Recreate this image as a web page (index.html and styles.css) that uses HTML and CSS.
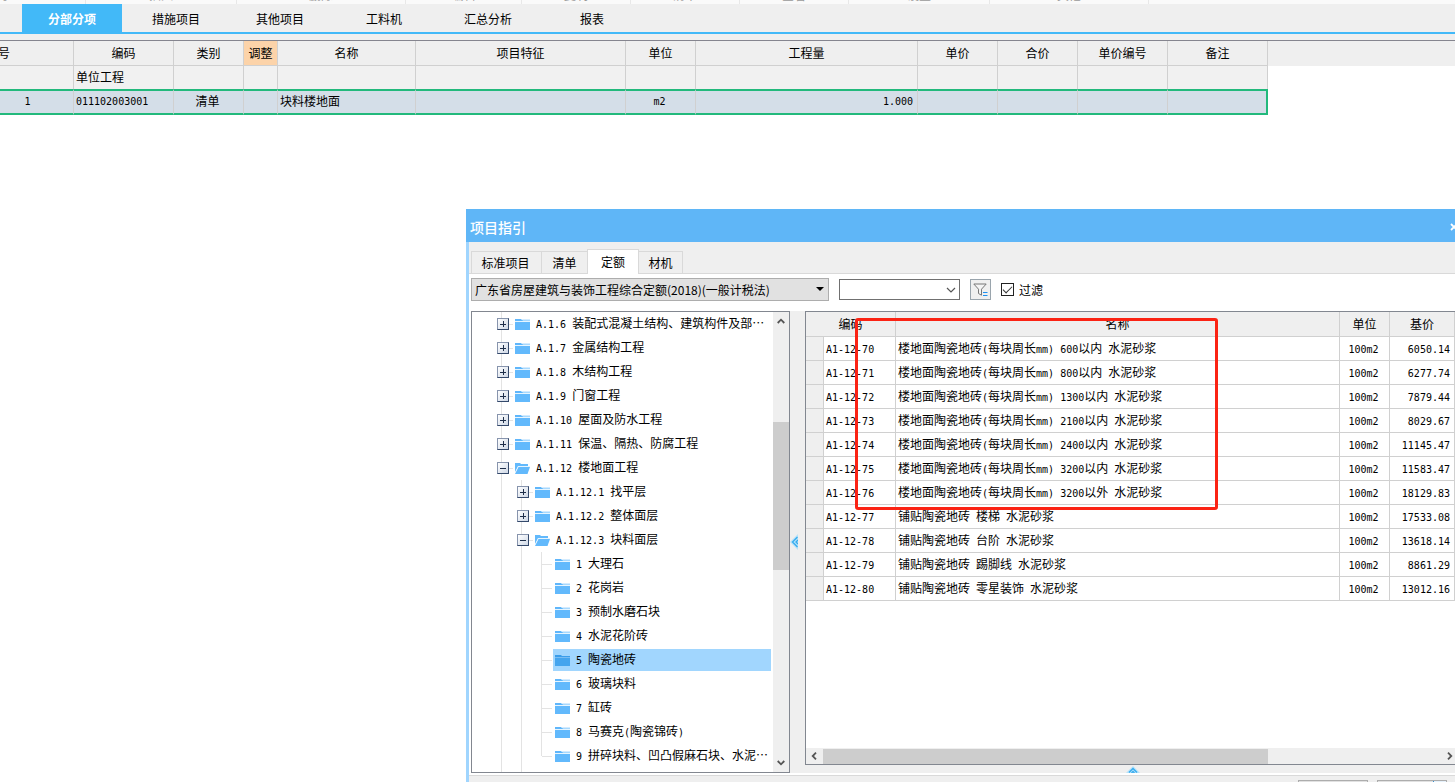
FILE: index.html
```html
<!DOCTYPE html>
<html lang="zh-CN">
<head>
<meta charset="utf-8">
<title>分部分项</title>
<link rel="stylesheet" href="styles.css">
</head>
<body>
<svg class="defs" aria-hidden="true">
  <symbol id="folder" viewBox="0 0 15 13">
    <path fill="#5fb6fb" d="M0 1h6l1 1h8v2H0z"/><path fill="#a7d8fd" d="M7 1.500h8v1.500H8z"/><path fill="#e6f5ff" d="M0 3h15v1H0z"/><path fill="#62b9fc" d="M0 4h15v8H0z"/>
  </symbol>
  <symbol id="folder-dark" viewBox="0 0 15 13">
    <path fill="#3b9dea" d="M0 1h6l1 1h8v2H0z"/><path fill="#79bdf2" d="M0 3h15v1H0z"/><path fill="#45a5ee" d="M0 4h15v8H0z"/>
  </symbol>
  <symbol id="folder-open" viewBox="0 0 15 13">
    <path fill="#62b9fc" d="M0 1h5l1 1h7v2H3L0 10z"/><path fill="#e6f5ff" d="M3 4h12v1H3z"/><path fill="#62b9fc" d="M3.500 5H15l-2.500 7H0z"/>
  </symbol>
  <symbol id="chev-up" viewBox="0 0 8 6"><path fill="none" stroke="#555" stroke-width="1.800" d="M.7 5 4 1.700 7.300 5"/></symbol>
  <symbol id="chev-down" viewBox="0 0 8 6"><path fill="none" stroke="#555" stroke-width="1.800" d="M.7 1 4 4.300 7.300 1"/></symbol>
  <symbol id="chev-left" viewBox="0 0 6 8"><path fill="none" stroke="#555" stroke-width="1.800" d="M5 .7 1.700 4 5 7.300"/></symbol>
  <symbol id="chev-right" viewBox="0 0 6 8"><path fill="none" stroke="#555" stroke-width="1.800" d="M1 .7 4.300 4 1 7.300"/></symbol>
</svg>

<div class="toolbar">
  <span class="tool tool-a">查询</span><span class="tool tool-b">插入</span><span class="tool tool-c">删除</span><span class="tool tool-d">编辑</span><span class="tool tool-e">复制</span><span class="tool tool-e">清单</span><span class="tool tool-e">查看</span><span class="tool tool-f">设置</span><span class="tool tool-g">其他</span>
</div>

<nav class="tabs">
  <button class="tab tab-active">分部分项</button>
  <button class="tab">措施项目</button>
  <button class="tab">其他项目</button>
  <button class="tab">工料机</button>
  <button class="tab">汇总分析</button>
  <button class="tab">报表</button>
</nav>

<div class="sheet">
  <table class="bill">
    <colgroup><col class="w74"><col class="w100"><col class="w70"><col class="w34"><col class="w138"><col class="w210"><col class="w70"><col class="w222"><col class="w80"><col class="w80"><col class="w90"><col class="w100"></colgroup>
    <thead>
      <tr><th class="seq">号</th><th>编码</th><th>类别</th><th class="adjust">调整</th><th>名称</th><th>项目特征</th><th>单位</th><th>工程量</th><th>单价</th><th>合价</th><th>单价编号</th><th>备注</th></tr>
    </thead>
    <tbody>
      <tr><td></td><td>单位工程</td><td></td><td></td><td></td><td></td><td></td><td></td><td></td><td></td><td></td><td></td></tr>
      <tr class="current"><td class="rownum"><span class="n">1</span></td><td><span class="n">011102003001</span></td><td class="mid">清单</td><td></td><td>块料楼地面</td><td></td><td class="mid"><span class="n">m2</span></td><td class="num"><span class="n">1.000</span></td><td></td><td></td><td></td><td></td></tr>
    </tbody>
  </table>
</div>

<section class="dialog">
  <header class="titlebar">
    <h1>项目指引</h1>
    <button class="close" aria-label="关闭"><svg width="8" height="8" viewBox="0 0 8 8"><path fill="none" stroke="#fff" stroke-width="1.800" d="m1 1 6 6M7 1 1 7"/></svg></button>
  </header>
  <div class="frame">
    <div class="pagetabs">
      <button class="ptab">标准项目</button><button class="ptab">清单</button><button class="ptab ptab-active">定额</button><button class="ptab">材机</button>
    </div>
    <div class="page">
      <div class="filters">
        <div class="library">
          <select aria-label="定额库"><option>广东省房屋建筑与装饰工程综合定额(2018)(一般计税法)</option></select>
          <svg class="caret" width="8" height="4" viewBox="0 0 8 4"><path d="M0 0h8L4 4z"/></svg>
        </div>
        <div class="combo">
          <input type="text" aria-label="关键字">
          <button aria-label="展开"><svg width="10" height="6" viewBox="0 0 10 6"><path fill="none" stroke="#555" stroke-width="1.200" d="m1 1 4 4 4-4"/></svg></button>
        </div>
        <button class="funnel" aria-label="筛选"><svg width="15" height="14" viewBox="0 0 15 14"><path fill="#f4f4f4" stroke="#777" d="M.8 1h12.400L8.500 6.200v6L5.500 10.500V6.200z"/><path stroke="#1e90ef" d="M10 9.500h4.500M10 12.500h4.500"/></svg></button>
        <label class="check"><input type="checkbox" checked>过滤</label>
      </div>

      <div class="panes">
        <div class="treebox">
          <ul class="tree">
            <li><div class="row"><button class="exp plus" aria-label="展开"></button><svg class="ico"><use href="#folder"/></svg><span><span class="n">A.1.6 </span>装配式混凝土结构、建筑构件及部⋯</span></div></li>
            <li><div class="row"><button class="exp plus" aria-label="展开"></button><svg class="ico"><use href="#folder"/></svg><span><span class="n">A.1.7 </span>金属结构工程</span></div></li>
            <li><div class="row"><button class="exp plus" aria-label="展开"></button><svg class="ico"><use href="#folder"/></svg><span><span class="n">A.1.8 </span>木结构工程</span></div></li>
            <li><div class="row"><button class="exp plus" aria-label="展开"></button><svg class="ico"><use href="#folder"/></svg><span><span class="n">A.1.9 </span>门窗工程</span></div></li>
            <li><div class="row"><button class="exp plus" aria-label="展开"></button><svg class="ico"><use href="#folder"/></svg><span><span class="n">A.1.10 </span>屋面及防水工程</span></div></li>
            <li><div class="row"><button class="exp plus" aria-label="展开"></button><svg class="ico"><use href="#folder"/></svg><span><span class="n">A.1.11 </span>保温、隔热、防腐工程</span></div></li>
            <li class="grow"><div class="row"><button class="exp" aria-label="收起"></button><svg class="ico"><use href="#folder-open"/></svg><span><span class="n">A.1.12 </span>楼地面工程</span></div>
              <ul>
                <li><div class="row"><button class="exp plus" aria-label="展开"></button><svg class="ico"><use href="#folder"/></svg><span><span class="n">A.1.12.1 </span>找平层</span></div></li>
                <li><div class="row"><button class="exp plus" aria-label="展开"></button><svg class="ico"><use href="#folder"/></svg><span><span class="n">A.1.12.2 </span>整体面层</span></div></li>
                <li><div class="row"><button class="exp" aria-label="收起"></button><svg class="ico"><use href="#folder-open"/></svg><span><span class="n">A.1.12.3 </span>块料面层</span></div>
                  <ul class="leaves">
                    <li><div class="leaf"><svg class="ico"><use href="#folder"/></svg><span><span class="n">1 </span>大理石</span></div></li>
                    <li><div class="leaf"><svg class="ico"><use href="#folder"/></svg><span><span class="n">2 </span>花岗岩</span></div></li>
                    <li><div class="leaf"><svg class="ico"><use href="#folder"/></svg><span><span class="n">3 </span>预制水磨石块</span></div></li>
                    <li><div class="leaf"><svg class="ico"><use href="#folder"/></svg><span><span class="n">4 </span>水泥花阶砖</span></div></li>
                    <li><div class="leaf leaf-on"><svg class="ico"><use href="#folder-dark"/></svg><span><span class="n">5 </span>陶瓷地砖</span></div></li>
                    <li><div class="leaf"><svg class="ico"><use href="#folder"/></svg><span><span class="n">6 </span>玻璃块料</span></div></li>
                    <li><div class="leaf"><svg class="ico"><use href="#folder"/></svg><span><span class="n">7 </span>缸砖</span></div></li>
                    <li><div class="leaf"><svg class="ico"><use href="#folder"/></svg><span><span class="n">8 </span>马赛克<span class="n">(</span>陶瓷锦砖<span class="n">)</span></span></div></li>
                    <li><div class="leaf"><svg class="ico"><use href="#folder"/></svg><span><span class="n">9 </span>拼碎块料、凹凸假麻石块、水泥⋯</span></div></li>
                  </ul>
                </li>
              </ul>
            </li>
          </ul>
          <div class="vbar">
            <svg width="8" height="6"><use href="#chev-up"/></svg>
            <div class="vtrack"><div class="vthumb"></div></div>
            <svg width="8" height="6"><use href="#chev-down"/></svg>
          </div>
        </div>

        <div class="splitter"><svg width="8" height="16" viewBox="0 0 8 16"><path fill="#b5e2fa" d="M8 0v16L0 8z"/><path fill="none" stroke="#35abee" stroke-width="1.300" d="M7.500 3 2.500 8l5 5M8 6 6 8l2 2"/></svg></div>

        <div class="right">
          <div class="grid">
            <div class="gridbody">
              <table class="quota">
                <colgroup><col class="w18"><col class="w72"><col><col class="w50"><col class="w65"></colgroup>
                <thead><tr><th colspan="2">编码</th><th>名称</th><th>单位</th><th>基价</th></tr></thead>
                <tbody>
                  <tr><td></td><td><span class="n">A1-12-70</span></td><td>楼地面陶瓷地砖<span class="n">(</span>每块周长<span class="n">mm) 600</span>以内<span class="n"> </span>水泥砂浆</td><td class="mid"><span class="n">100m2</span></td><td class="num"><span class="n">6050.14</span></td></tr>
                  <tr><td></td><td><span class="n">A1-12-71</span></td><td>楼地面陶瓷地砖<span class="n">(</span>每块周长<span class="n">mm) 800</span>以内<span class="n"> </span>水泥砂浆</td><td class="mid"><span class="n">100m2</span></td><td class="num"><span class="n">6277.74</span></td></tr>
                  <tr><td></td><td><span class="n">A1-12-72</span></td><td>楼地面陶瓷地砖<span class="n">(</span>每块周长<span class="n">mm) 1300</span>以内<span class="n"> </span>水泥砂浆</td><td class="mid"><span class="n">100m2</span></td><td class="num"><span class="n">7879.44</span></td></tr>
                  <tr><td></td><td><span class="n">A1-12-73</span></td><td>楼地面陶瓷地砖<span class="n">(</span>每块周长<span class="n">mm) 2100</span>以内<span class="n"> </span>水泥砂浆</td><td class="mid"><span class="n">100m2</span></td><td class="num"><span class="n">8029.67</span></td></tr>
                  <tr><td></td><td><span class="n">A1-12-74</span></td><td>楼地面陶瓷地砖<span class="n">(</span>每块周长<span class="n">mm) 2400</span>以内<span class="n"> </span>水泥砂浆</td><td class="mid"><span class="n">100m2</span></td><td class="num"><span class="n">11145.47</span></td></tr>
                  <tr><td></td><td><span class="n">A1-12-75</span></td><td>楼地面陶瓷地砖<span class="n">(</span>每块周长<span class="n">mm) 3200</span>以内<span class="n"> </span>水泥砂浆</td><td class="mid"><span class="n">100m2</span></td><td class="num"><span class="n">11583.47</span></td></tr>
                  <tr><td></td><td><span class="n">A1-12-76</span></td><td>楼地面陶瓷地砖<span class="n">(</span>每块周长<span class="n">mm) 3200</span>以外<span class="n"> </span>水泥砂浆</td><td class="mid"><span class="n">100m2</span></td><td class="num"><span class="n">18129.83</span></td></tr>
                  <tr><td></td><td><span class="n">A1-12-77</span></td><td>铺贴陶瓷地砖<span class="n"> </span>楼梯<span class="n"> </span>水泥砂浆</td><td class="mid"><span class="n">100m2</span></td><td class="num"><span class="n">17533.08</span></td></tr>
                  <tr><td></td><td><span class="n">A1-12-78</span></td><td>铺贴陶瓷地砖<span class="n"> </span>台阶<span class="n"> </span>水泥砂浆</td><td class="mid"><span class="n">100m2</span></td><td class="num"><span class="n">13618.14</span></td></tr>
                  <tr><td></td><td><span class="n">A1-12-79</span></td><td>铺贴陶瓷地砖<span class="n"> </span>踢脚线<span class="n"> </span>水泥砂浆</td><td class="mid"><span class="n">100m2</span></td><td class="num"><span class="n">8861.29</span></td></tr>
                  <tr><td></td><td><span class="n">A1-12-80</span></td><td>铺贴陶瓷地砖<span class="n"> </span>零星装饰<span class="n"> </span>水泥砂浆</td><td class="mid"><span class="n">100m2</span></td><td class="num"><span class="n">13012.16</span></td></tr>
                </tbody>
              </table>
              <div class="mark"></div>
            </div>
            <div class="hbar">
              <svg width="6" height="8"><use href="#chev-left"/></svg>
              <div class="htrack"><div class="hthumb"></div></div>
              <svg width="6" height="8"><use href="#chev-right"/></svg>
            </div>
          </div>
          <div class="collapse"><svg width="14" height="7" viewBox="0 0 14 7"><path fill="#b5e2fa" d="M0 7 7 0l7 7z"/><path fill="none" stroke="#35abee" stroke-width="1.300" d="M3 6.500l4-4 4 4M5.500 7 7 5.500 8.500 7"/></svg></div>
        </div>
      </div>
    </div>
    <footer class="actions"><button class="act" aria-label="插入"></button><button class="act act-split" aria-label="替换"></button></footer>
  </div>
</section>
</body>
</html>
```

FILE: styles.css
```css
* { box-sizing: border-box; }

body {
  margin: 0;
  height: 100vh;
  overflow: hidden;
  position: relative;
  background: #fff;
  color: #000;
  font: 12px/18px "Noto Sans CJK SC", sans-serif;
}

button, input, select {
  font: inherit;
  color: inherit;
  margin: 0;
  padding: 0;
  border: 0;
  background: none;
  border-radius: 0;
}

svg { display: block; flex: none; }
.defs { width: 0; height: 0; position: absolute; }

.n {
  font-family: "DejaVu Sans Mono", monospace;
  font-size: 10px;
  white-space: pre;
}

/* toolbar */
.toolbar {
  display: flex;
  align-items: stretch;
  height: 4px;
  overflow: hidden;
  background: #fafafa;
}
.tool {
  display: flex;
  align-items: flex-end;
  justify-content: center;
  flex: none;
  color: #999;
  line-height: 18px;
  border-right: 1px solid #e8e8e8;
}
.tool-a { width: 86px; justify-content: flex-start; text-indent: -16px; }
.tool-b { width: 151px; }
.tool-c { width: 169px; }
.tool-d { width: 116px; }
.tool-e { width: 109px; }
.tool-f { width: 141px; }
.tool-g { width: 159px; }

/* main tabs */
.tabs {
  display: flex;
  gap: 4px;
  padding-left: 22px;
  background: #efefef;
  border-bottom: 2px solid #42b9f8;
}
.tab { width: 100px; height: 28px; padding-top: 2px; }
.tab-active { background: #42b9f8; color: #fff; font-weight: bold; }

/* bill table */
.sheet {
  border-top: 6px solid #efefef;
  background: linear-gradient(#efefef, #efefef) top / 100% 26px no-repeat;
  box-shadow: inset 0 1px #85858f;
  padding-top: 1px;
}
table { border-collapse: separate; border-spacing: 0; table-layout: fixed; }
th { font-weight: normal; }
th, td { padding: 0; white-space: nowrap; overflow: hidden; }
.bill { width: 1268px; }
.bill th {
  height: 25px;
  background: #efefef;
  border-right: 1px solid #d0d0d0;
  border-bottom: 1px solid #d0d0d0;
}
.bill td {
  height: 23px;
  padding: 0 4px 2px 2px;
  background: #f1f1f1;
  border-right: 1px solid #d0d0d0;
}
.bill .seq { text-align: left; text-indent: -2px; }
.bill .adjust { background: #fcd3a9; }
.bill .current td {
  height: 25px;
  background: #d4dee8;
  border-top: 2px solid #22b97c;
  border-bottom: 2px solid #22b97c;
}
.bill .current td:last-child { border-right: 2px solid #22b97c; }
.bill .rownum { text-align: center; padding-right: 20px; }
.mid { text-align: center; }
.num { text-align: right; }

.w18 { width: 18px; }
.w34 { width: 34px; }
.w50 { width: 50px; }
.w65 { width: 65px; }
.w70 { width: 70px; }
.w72 { width: 72px; }
.w74 { width: 74px; }
.w80 { width: 80px; }
.w90 { width: 90px; }
.w100 { width: 100px; }
.w138 { width: 138px; }
.w210 { width: 210px; }
.w222 { width: 222px; }

/* floating window */
.dialog {
  position: absolute;
  left: 466px;
  right: 0;
  top: 209px;
  bottom: 0;
  display: flex;
  flex-direction: column;
  background: #efefef;
}
.titlebar {
  display: flex;
  align-items: center;
  justify-content: space-between;
  height: 33px;
  padding: 2px 0 0 4px;
  background: #5fb6f7;
  color: #fff;
  overflow: hidden;
}
.titlebar h1 { margin: 0; font-size: 14px; line-height: 20px; font-weight: 500; }
.close { margin-right: -3px; }
.frame {
  flex: 1;
  min-height: 0;
  display: flex;
  flex-direction: column;
  border-left: 3px solid #a0d5fe;
}
.pagetabs {
  display: flex;
  align-items: flex-end;
  height: 32px;
  padding-left: 2px;
  border-bottom: 1px solid #d9d9d9;
}
.ptab {
  height: 22px;
  padding: 0;
  border: 1px solid #d9d9d9;
  border-bottom: 0;
  border-right: 0;
}
.ptab:first-child { width: 70px; padding-right: 2px; }
.ptab:nth-child(2) { width: 46px; }
.ptab:last-child { width: 44px; border-left: 0; border-right: 1px solid #d9d9d9; }
.ptab-active {
  height: 25px;
  width: 52px;
  margin-bottom: -1px;
  background: #fff;
  border-right: 1px solid #d9d9d9;
}
.page {
  flex: 1;
  min-height: 0;
  display: flex;
  flex-direction: column;
  padding: 4px 0 2px 2px;
  background: #fff;
  border-bottom: 1px solid #d9d9d9;
}
.filters { display: flex; align-items: center; gap: 10px; height: 23px; }
.library { position: relative; width: 358px; height: 23px; }
.library select {
  appearance: none;
  width: 100%;
  height: 100%;
  padding-left: 3px;
  background: #e1e1e1;
  border: 1px solid #adadad;
}
.caret { position: absolute; right: 5px; top: 9px; }
.combo {
  display: flex;
  width: 121px;
  height: 21px;
  border: 1px solid #707070;
}
.combo input { flex: 1; min-width: 0; padding-left: 3px; }
.combo button { width: 17px; display: grid; place-items: center; }
.funnel {
  display: grid;
  place-items: center;
  width: 21px;
  height: 21px;
  background: #f0f0f0;
  border: 1px solid #9aa5ad;
}
.check { display: flex; align-items: center; gap: 5px; }
.check input {
  appearance: none;
  width: 13px;
  height: 13px;
  border: 1px solid #222;
  background: #fff;
  display: grid;
  place-items: center;
}
.check input::before {
  content: "";
  width: 8px;
  height: 4px;
  margin-bottom: 2px;
  border: solid #333;
  border-width: 0 0 1px 1px;
  transform: rotate(-45deg);
}

.panes {
  flex: 1;
  min-height: 0;
  margin-top: 10px;
  display: flex;
  background: #efefef;
}

/* tree */
.treebox {
  display: flex;
  width: 319px;
  flex: none;
  background: #fff;
  border: 1px solid #828790;
  overflow: hidden;
}
.tree, .tree ul {
  list-style: none;
  margin: 0;
  padding: 0;
  background: linear-gradient(#e3e3e3, #e3e3e3) 29px 0 / 1px 100% no-repeat;
}
.tree {
  flex: 1;
  min-width: 0;
  display: flex;
  flex-direction: column;
}
.tree ul { margin-left: 20px; }
.grow { flex: 1; display: flex; flex-direction: column; }
.grow > ul { flex: 1; }
.tree .leaves { background-size: 1px calc(100% - 12px); }
.row {
  display: flex;
  align-items: center;
  gap: 6px;
  height: 24px;
  padding-left: 24px;
  white-space: nowrap;
  background: linear-gradient(#e3e3e3, #e3e3e3) 37px 12px / 4px 1px no-repeat;
}
.exp {
  flex: none;
  width: 12px;
  height: 12px;
  margin-left: 1px;
  border: 1px solid #8794ad;
  border-right-color: #34496b;
  border-bottom-color: #34496b;
  background:
    linear-gradient(#1f2f4a, #1f2f4a) center / 6px 1px no-repeat,
    linear-gradient(135deg, #fff, #cfd8e6);
}
.plus {
  background:
    linear-gradient(#1f2f4a, #1f2f4a) center / 6px 1px no-repeat,
    linear-gradient(#1f2f4a, #1f2f4a) center / 1px 6px no-repeat,
    linear-gradient(135deg, #fff, #cfd8e6);
}
.ico { width: 15px; height: 13px; }
.leaves li {
  padding: 1px 2px 1px 41px;
  background: linear-gradient(#e3e3e3, #e3e3e3) 30px 12px / 10px 1px no-repeat;
}
.leaf {
  display: flex;
  align-items: center;
  gap: 6px;
  height: 22px;
  padding-left: 2px;
  white-space: nowrap;
}
.leaf-on { background: #a1d6fe; }

.vbar {
  width: 16px;
  display: flex;
  flex-direction: column;
  align-items: center;
  padding: 6px 0;
  background: #efefef;
}
.vtrack { flex: 1; align-self: stretch; }
.vthumb { height: 34%; margin-top: 98px; background: #cdcdcd; }

.splitter { width: 15px; flex: none; display: flex; align-items: center; }

/* quota grid */
.right { flex: 1; min-width: 0; display: flex; flex-direction: column; }
.grid {
  flex: 1;
  min-height: 0;
  display: flex;
  flex-direction: column;
  background: #fff;
  border: 1px solid #828790;
  border-right: 0;
}
.gridbody { flex: 1; min-height: 0; position: relative; }
.quota { width: 100%; }
.quota th, .quota td {
  height: 24px;
  border-right: 1px solid #d0d0d0;
  border-bottom: 1px solid #d0d0d0;
}
.quota th { height: 25px; background: #efefef; }
.quota td { padding: 0 4px 0 2px; line-height: 18px; }
.quota td:first-child { background: #efefef; }
.mark {
  position: absolute;
  left: 49px;
  top: 6px;
  width: 363px;
  height: 192px;
  border: 3px solid #fb2314;
  border-radius: 3px;
}
.hbar {
  display: flex;
  align-items: center;
  height: 16px;
  padding: 0 2px 0 5px;
  background: #efefef;
}
.htrack { flex: 1; height: 15px; margin: 0 6px; }
.hthumb { width: 72%; height: 100%; background: #cdcdcd; }
.collapse { height: 8px; display: flex; justify-content: center; align-items: flex-end; padding-left: 6px; }

.actions {
  display: flex;
  justify-content: flex-end;
  gap: 9px;
  height: 6px;
  padding: 4px 8px 0 0;
  overflow: hidden;
}
.act { width: 70px; height: 22px; background: #e1e1e1; border: 1px solid #adadad; }
.act-split { background: linear-gradient(90deg, #e1e1e1 55px, #3c8fcb 55px 56px, #e5f1fb 56px); }
```
